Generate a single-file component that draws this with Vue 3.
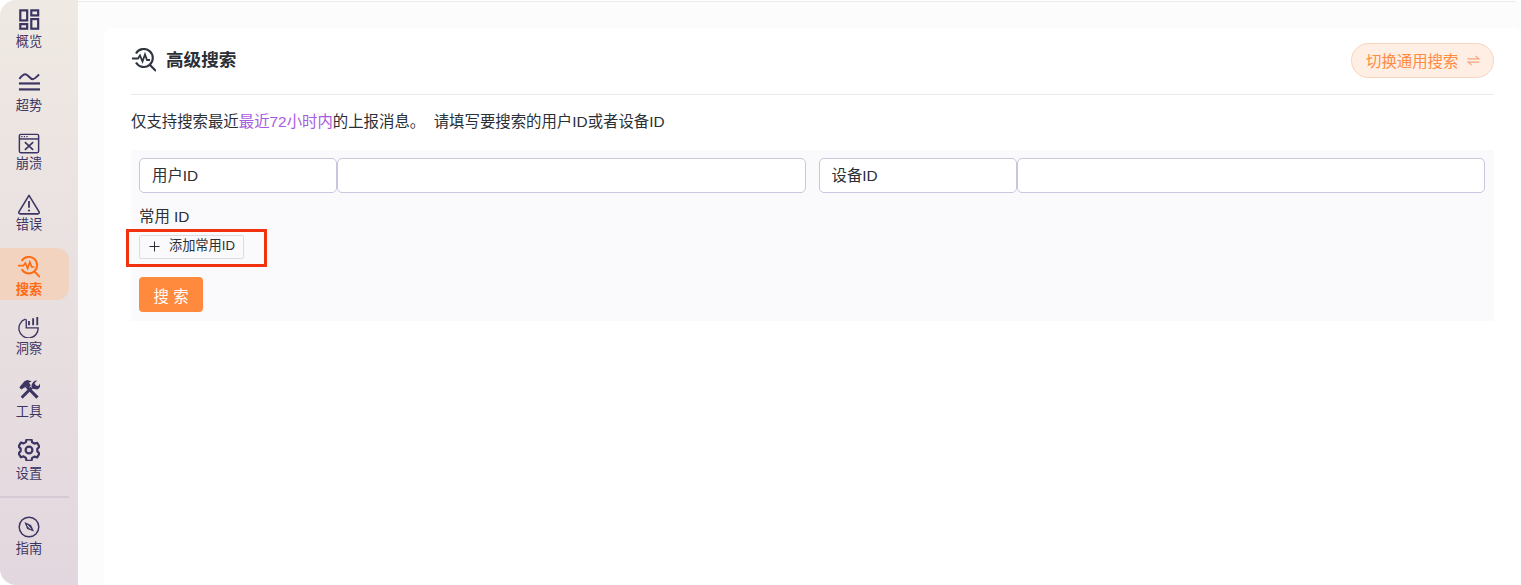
<script setup>
const navItems = [
  { label: '概览', icon: 'overview', top: 9, gap: 3 },
  { label: '超势', icon: 'trend', top: 22, gap: 4 },
  { label: '崩溃', icon: 'crash', top: 19, gap: 1 },
  { label: '错误', icon: 'error', top: 22, gap: 1 },
  { label: '搜索', icon: 'search', top: 8, gap: 4, active: true },
  { label: '洞察', icon: 'insight', top: 16, gap: 3 },
  { label: '工具', icon: 'tool', top: 22, gap: 3 },
  { label: '设置', icon: 'setting', top: 19, gap: 5 }
]
</script>

<template>
  <div class="page">
    <aside class="sidebar">
      <div
        v-for="item in navItems"
        :key="item.label"
        class="nav-item"
        :class="{ active: item.active }"
        :style="{ paddingTop: item.top + 'px' }"
      >
        <svg class="nav-icon" viewBox="0 0 24 24" :style="{ marginBottom: item.gap + 'px' }">
          <g v-if="item.icon === 'overview'" fill="none" stroke="currentColor" stroke-width="2.4">
            <rect x="2.5" y="1.5" width="7.5" height="11" />
            <rect x="14.5" y="1.5" width="7.5" height="5.5" />
            <rect x="2.5" y="16.5" width="7.5" height="5" />
            <rect x="14.5" y="11" width="7.5" height="10.500" />
          </g>
          <g v-else-if="item.icon === 'trend'" fill="none" stroke="currentColor" stroke-width="2.200">
            <path d="M1.500 7.500C3.500 5 5.500 2.500 8 2.500 11 2.500 13 7.800 16 7.800 18.500 7.800 20.500 4.800 23 2.800" />
            <path d="M1 12.500H24" stroke-width="2.400" />
            <path d="M1 19H24" stroke-width="2.400" />
          </g>
          <g v-else-if="item.icon === 'crash'" fill="none" stroke="currentColor" stroke-width="1.600">
            <rect x="1.500" y="1.500" width="21" height="20" rx="1.500" />
            <path d="M1.500 6.500H22.500" />
            <path d="M7.500 10 16.500 18.500M16.500 10 7.500 18.500" stroke-width="1.800" />
            <path d="M3.500 4h1.400M6.300 4h1.400M9.100 4h1.400" stroke-width="1.300" />
          </g>
          <g v-else-if="item.icon === 'error'" fill="none" stroke="currentColor" stroke-width="1.700">
            <path d="M12 1.500 23 19.500a1.500 1.500 0 0 1-1.300 2.200H2.300a1.500 1.500 0 0 1-1.300-2.200Z" stroke-linejoin="round" />
            <path d="M12 7.500v7.500" stroke-width="2" />
            <circle cx="12" cy="18" r="1.200" fill="currentColor" stroke="none" />
          </g>
          <g v-else-if="item.icon === 'search'" fill="none" stroke="currentColor" stroke-width="2.100">
            <path d="M4 5.500a9 9 0 1 1 0 9" />
            <path d="M0 10.500h6l2-3 2.500 6 2.500-7 2 5.500h3" stroke-width="1.800" />
            <path d="M17.500 16.500 24 23" stroke-width="2.200" />
          </g>
          <g v-else-if="item.icon === 'insight'" fill="none" stroke="currentColor" stroke-width="1.500">
            <path d="M8 3.500A10.500 10.500 0 1 0 22 13H9V3.500" />
            <path d="M12 5.500V10M16.500 2.500V10M21 1V10" stroke-width="2" />
          </g>
          <g v-else-if="item.icon === 'tool'" fill="currentColor" stroke="none">
            <path d="M1.500 9 7 2.500l3-1.500 5 1.500-3 1.500 2 3-2.500 2.500-2-1.500L3.500 11.500Z" />
            <path d="M8 9 20 21.500l2.500-2.500L10.500 7Z" />
            <path d="M13.500 8.500 3 19l2 2.500L16 10.500Z" />
            <path d="M15.500 10.500c-2-3 0-7 3-8.500l2.500-.5-3 3 1.500 2.500 2.500.5 2.500-3c.5 3-1 6-3.500 7Z" />
          </g>
          <g v-else-if="item.icon === 'setting'" fill="none" stroke="currentColor" stroke-width="2.400">
            <path d="M9.300 1.500h5.400l.7 3.100 2.500 1.400 3-.9 2.500 4.400-2.300 2.200v2.800l2.300 2.200-2.500 4.400-3-.9-2.500 1.400-.7 3.100H9.300l-.7-3.100L6.100 20l-3 .9L.6 16.500l2.300-2.200v-2.800L.6 9.300l2.500-4.400 3 .9 2.500-1.400Z" stroke-linejoin="round" transform="translate(0 -1)" />
            <circle cx="12" cy="12" r="3.700" />
          </g>
        </svg>
        <span class="nav-label">{{ item.label }}</span>
      </div>
      <div class="nav-sep"></div>
      <div class="nav-item guide">
        <svg class="nav-icon" viewBox="0 0 24 24">
          <circle cx="12" cy="12" r="10.700" fill="none" stroke="currentColor" stroke-width="1.600" />
          <path d="M7 6.500 14.200 9.800 17.500 17 10 14.200Z" fill="currentColor" />
          <path d="M10 10 14 14" stroke="#e5dade" stroke-width="1.100" />
        </svg>
        <span class="nav-label">指南</span>
      </div>
    </aside>

    <main class="main">
      <div class="top-line"></div>
      <div class="content">
        <section class="card">
          <header class="card-head">
            <div class="title-wrap">
              <svg class="title-icon" viewBox="0 0 24 24" fill="none" stroke="currentColor" stroke-width="2.100">
                <path d="M4 5.500a9 9 0 1 1 0 9" />
                <path d="M0 10.500h6l2-3 2.500 6 2.500-7 2 5.500h3" stroke-width="1.800" />
                <path d="M17.500 16.500 24 23" stroke-width="2.200" />
              </svg>
              <h1 class="title">高级搜索</h1>
            </div>
            <button class="switch-btn">
              <span>切换通用搜索</span>
              <svg class="switch-icon" viewBox="0 0 14 12" fill="none" stroke="currentColor" stroke-width="1.200">
                <path d="M0.500 4.200H13L9 1" />
                <path d="M13.500 7.800H1L5 11" />
              </svg>
            </button>
          </header>

          <p class="desc">仅支持搜索最近<span class="accent">最近72小时内</span>的上报消息。&nbsp;&nbsp;请填写要搜索的用户ID或者设备ID</p>

          <div class="panel">
            <div class="id-row">
              <div class="id-group">
                <div class="addon">用户ID</div>
                <input class="id-input" />
              </div>
              <div class="id-group">
                <div class="addon">设备ID</div>
                <input class="id-input" />
              </div>
            </div>
            <div class="common-label">常用 ID</div>
            <div class="common-row">
              <button class="add-btn">
                <svg class="plus" viewBox="0 0 12 12" fill="none" stroke="currentColor" stroke-width="1.100">
                  <path d="M6 .5V11.500M.5 6H11.500" />
                </svg>
                <span class="add-text">添加常用ID</span>
              </button>
              <div class="mark"></div>
            </div>
            <button class="search-btn">搜 索</button>
          </div>
        </section>
      </div>
    </main>
  </div>
</template>

<style>
html, body { margin: 0; background: #fff; overflow: hidden; }
</style>

<style scoped>
.page {
  display: flex;
  width: 1521px;
  height: 585px;
  overflow: hidden;
  background: #fff;
  font-family: "Liberation Sans", "Noto Sans CJK SC", sans-serif;
  color: #2b2f36;
}
.sidebar {
  width: 78px;
  flex: none;
  box-sizing: border-box;
  padding-right: 9px;
  border-radius: 16px 0 0 16px;
  background: linear-gradient(180deg, #efe9e3 0%, #e2d7de 100%);
  color: #3c3563;
}
.nav-item {
  display: flex;
  flex-direction: column;
  align-items: center;
  padding-right: 11px;
  font-size: 13.2px;
  line-height: 16px;
}
.nav-item.active {
  margin-top: 15px;
  height: 52px;
  box-sizing: border-box;
  color: #ff6a13;
  font-weight: 700;
  background: #f2d3bf;
  border-radius: 0 12px 12px 0;
}
.nav-icon { width: 22px; height: 22px; display: block; flex: none; }
.nav-label { display: block; }
.nav-sep {
  height: 2px;
  margin-top: 14px;
  background: #d6cad5;
}
.guide { padding-top: 18px; }
.guide .nav-icon { margin-bottom: 3px; }

.main {
  flex: 1;
  min-width: 0;
  display: flex;
  flex-direction: column;
}
.top-line {
  height: 1px;
  margin: 1px 5px 0 0;
  background: #ebebeb;
  flex: none;
}
.content {
  flex: 1;
  padding: 26px 0 0 26px;
  background: #fcfcfc;
}
.card {
  height: 100%;
  box-sizing: border-box;
  padding: 0 27px;
  background: #fff;
  border-radius: 8px 8px 0 0;
}
.card-head {
  height: 67px;
  box-sizing: border-box;
  padding-bottom: 2px;
  border-bottom: 1px solid #ebebeb;
  display: flex;
  align-items: center;
  justify-content: space-between;
}
.title-wrap { display: flex; align-items: center; gap: 10px; }
.title-icon { width: 24px; height: 24px; color: #2f3640; margin-left: 1px; }
.title { margin: 0; font-size: 17.6px; line-height: 24px; font-weight: 700; color: #2b2f36; }
.switch-btn {
  display: flex;
  align-items: center;
  gap: 9px;
  height: 35px;
  width: 143px;
  box-sizing: border-box;
  padding: 0 13px 0 14px;
  border: 1px solid #fbd4be;
  border-radius: 18px;
  background: #feeee4;
  color: #ff8c42;
  font: inherit;
  font-size: 15.4px;
  white-space: nowrap;
}
.switch-icon { width: 13px; height: 11px; flex: none; color: #f5a57d; }
.desc {
  margin: 0;
  padding-top: 16px;
  height: 55px;
  box-sizing: border-box;
  font-size: 15.4px;
  line-height: 22px;
}
.accent { color: #a85be0; }
.panel {
  position: relative;
  padding: 8px 9px 9px 8px;
  height: 171px;
  box-sizing: border-box;
  background: #fafafc;
}
.id-row { display: flex; gap: 13px; }
.id-group { flex: 1; display: flex; height: 35px; }
.addon {
  width: 198px;
  flex: none;
  box-sizing: border-box;
  padding-left: 12px;
  border: 1px solid #c9c7df;
  border-radius: 5px;
  background: #fff;
  font-size: 15.4px;
  line-height: 33px;
}
.id-input {
  flex: 1;
  min-width: 0;
  box-sizing: border-box;
  padding: 0 12px;
  border: 1px solid #c9c7df;
  border-radius: 5px;
  background: #fff;
  outline: none;
}
.common-label {
  margin-top: 13px;
  font-size: 15.4px;
  line-height: 22px;
}
.common-row { position: relative; margin-top: 7px; height: 24px; }
.add-btn {
  display: flex;
  align-items: center;
  gap: 9px;
  width: 105px;
  height: 24px;
  box-sizing: border-box;
  padding: 0 0 0 9px;
  border: 1px solid #dcdcdc;
  border-radius: 2px;
  background: #fafafc;
  color: #2b2f36;
  font: inherit;
  font-size: 13.2px;
  white-space: nowrap;
}
.add-text { display: block; line-height: 16px; margin-top: -2px; }
.plus { width: 11px; height: 11px; flex: none; margin-top: -1px; }
.mark {
  position: absolute;
  left: -13px;
  top: -6px;
  width: 141px;
  height: 38px;
  box-sizing: border-box;
  border: 3px solid #f0320f;
  pointer-events: none;
}
.search-btn {
  display: block;
  margin-top: 18px;
  width: 64px;
  height: 35px;
  padding: 0;
  border: 0;
  border-radius: 4px;
  background: #ff8a3d;
  color: #fff;
  font: inherit;
  font-size: 15.4px;
}
</style>
